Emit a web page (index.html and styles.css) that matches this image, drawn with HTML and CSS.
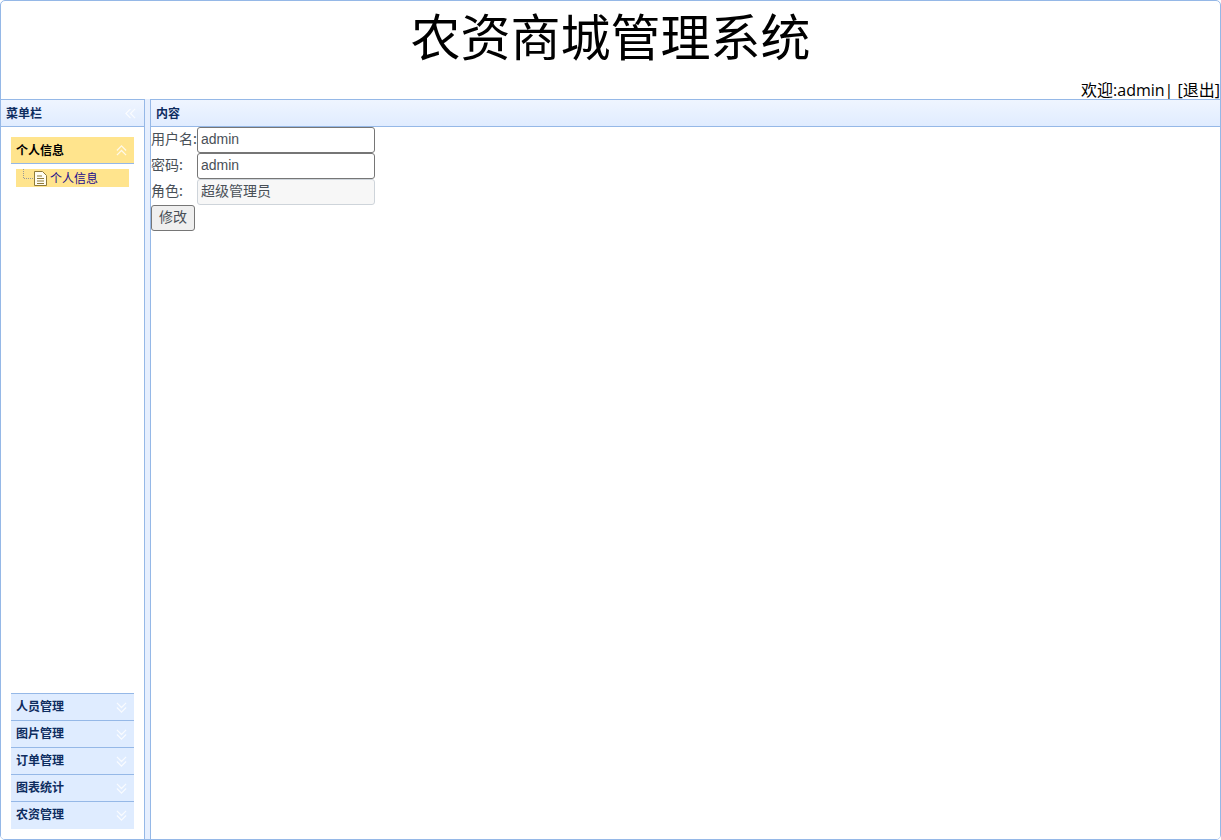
FILE: index.html
```html
<!DOCTYPE html>
<html lang="zh">
<head>
<meta charset="utf-8">
<title>农资商城管理系统</title>
<link rel="stylesheet" href="styles.css">
</head>
<body>
<div class="app">
  <header class="top">
    <h1 class="title">农资商城管理系统</h1>
    <div class="welcome">欢迎:admin| [退出]</div>
  </header>
  <div class="main">
    <aside class="side">
      <div class="panel-head side-head">
        <span>菜单栏</span>
        <svg class="ico" viewBox="0 0 12 12"><path d="M6 1L1 6l5 5M11 1L6 6l5 5"/></svg>
      </div>
      <div class="side-body">
        <div class="acc">
          <div class="acc-head active">
            <span>个人信息</span>
            <svg class="ico" viewBox="0 0 12 12"><path d="M1 6l5-5 5 5M1 11l5-5 5 5"/></svg>
          </div>
          <div class="acc-open">
            <div class="tree-item">
              <svg class="tree-line" width="11" height="12" viewBox="0 0 11 12"><path d="M1.5 0v9.5H11"/></svg>
              <svg class="file" width="13" height="15" viewBox="0 0 13 15"><path class="file-body" d="M.5.5h8l4 4v10H.5z"/><path class="file-lines" d="M3 5h5M3 7.5h7M3 10h7M3 12.5h7"/></svg>
              <span>个人信息</span>
            </div>
          </div>
          <div class="acc-head"><span>人员管理</span><svg class="ico" viewBox="0 0 12 12"><path d="M1 1l5 5 5-5M1 6l5 5 5-5"/></svg></div>
          <div class="acc-head"><span>图片管理</span><svg class="ico" viewBox="0 0 12 12"><path d="M1 1l5 5 5-5M1 6l5 5 5-5"/></svg></div>
          <div class="acc-head"><span>订单管理</span><svg class="ico" viewBox="0 0 12 12"><path d="M1 1l5 5 5-5M1 6l5 5 5-5"/></svg></div>
          <div class="acc-head"><span>图表统计</span><svg class="ico" viewBox="0 0 12 12"><path d="M1 1l5 5 5-5M1 6l5 5 5-5"/></svg></div>
          <div class="acc-head"><span>农资管理</span><svg class="ico" viewBox="0 0 12 12"><path d="M1 1l5 5 5-5M1 6l5 5 5-5"/></svg></div>
        </div>
      </div>
    </aside>
    <section class="content">
      <div class="panel-head content-head"><span>内容</span></div>
      <form class="form">
        <div class="row"><label class="lbl">用户名:</label><input class="field" type="text" value="admin"></div>
        <div class="row"><label class="lbl">密码:</label><input class="field" type="text" value="admin"></div>
        <div class="row"><label class="lbl">角色:</label><div class="field readonly">超级管理员</div></div>
        <button class="btn" type="button">修改</button>
      </form>
    </section>
  </div>
</div>
</body>
</html>
```
FILE: styles.css
```css
* { box-sizing: border-box; }
html, body { margin: 0; height: 100%; }
body {
  height: 840px;
  overflow: hidden;
  background: #fff;
  font-family: "Liberation Sans", "Noto Sans CJK SC", sans-serif;
  font-size: 14px;
  color: #000;
}
.app {
  height: 840px;
  display: flex;
  flex-direction: column;
  border: 1px solid #95b8e7;
  border-radius: 5px;
  overflow: hidden;
}
.top {
  height: 98px;
  flex: none;
  display: flex;
  flex-direction: column;
}
.title {
  margin: 0;
  height: 80px;
  text-align: center;
  font-size: 50px;
  line-height: 77px;
  font-weight: 400;
  font-family: "Liberation Sans", "Noto Sans CJK SC", sans-serif;
}
.welcome {
  height: 18px;
  text-align: right;
  font-size: 16px;
  line-height: 18px;
  font-family: "Open Sans", "Noto Sans CJK SC", sans-serif;
}
.main { flex: 1; display: flex; min-height: 0; background: #e6effe; }
.panel-head {
  height: 28px;
  flex: none;
  display: flex;
  align-items: center;
  justify-content: space-between;
  border-top: 1px solid #95b8e7;
  border-bottom: 1px solid #95b8e7;
  background: linear-gradient(to bottom, #eff5ff, #e0ecff);
  color: #0e2d5f;
  font-size: 12px;
  font-weight: 700;
  font-family: "Noto Sans CJK SC", sans-serif;
}
.panel-head span { padding-bottom: 2px; }
.side {
  width: 144px;
  flex: none;
  display: flex;
  flex-direction: column;
  border-right: 1px solid #95b8e7;
}
.side-head { padding: 0 8px 0 5px; }
.side-body { flex: 1; background: #fff; padding: 10px; display: flex; min-height: 0; }
.acc { flex: 1; display: flex; flex-direction: column; background: #fff; }
.ico { width: 11px; height: 11px; flex: none; fill: none; stroke: #fff; stroke-width: 1.4; opacity: .8; }
.acc-head {
  height: 27px;
  flex: none;
  display: flex;
  align-items: center;
  justify-content: space-between;
  padding: 0 7px 0 5px;
  background: #dfecff;
  border-top: 1px solid #95b8e7;
  color: #0e2d5f;
  font-size: 12px;
  font-weight: 700;
  font-family: "Noto Sans CJK SC", sans-serif;
}
.acc-head span { padding-bottom: 4px; }
.acc-head:last-child { height: 28px; }
.acc-head.active {
  border-top: 0;
  border-bottom: 1px solid #95b8e7;
  background: #ffe48d;
  color: #000;
}
.acc-head.active span { padding-bottom: 2px; }
.acc-open { flex: 1; padding: 5px 5px 0; }
.tree-item {
  height: 18px;
  display: flex;
  align-items: center;
  background: #ffe48d;
  color: #1a0a8c;
  font-size: 12px;
  font-family: "Noto Sans CJK SC", sans-serif;
}
.tree-item span { padding-bottom: 2px; }
.tree-line { margin-left: 6px; margin-bottom: 6px; fill: none; stroke: #999; stroke-dasharray: 1 1; }
.file { margin: 0 3px 0 1px; }
.file-body { fill: #fffdf2; stroke: #8f7a3a; }
.file-lines { fill: none; stroke: #8f7a3a; }
.content {
  flex: 1;
  min-width: 0;
  margin-left: 5px;
  display: flex;
  flex-direction: column;
  background: #fff;
  border-left: 1px solid #95b8e7;
}
.content-head { padding: 0 5px; justify-content: flex-start; }
.form { display: flex; flex-direction: column; align-items: flex-start; color: #495057; }
.row { display: flex; align-items: center; height: 26px; }
.lbl { width: 46px; padding-bottom: 4px; font-size: 14px; font-family: "Noto Sans CJK SC", sans-serif; color: #495057; }
.field {
  width: 178px;
  height: 26px;
  padding: 0 3px 2px;
  border: 1px solid #767676;
  border-radius: 3px;
  background: #fff;
  color: #495057;
  font-family: "Liberation Sans", "Noto Sans CJK SC", sans-serif;
  font-size: 14px;
  outline: 0;
}
.readonly {
  display: flex;
  align-items: center;
  padding-bottom: 4px;
  background: #f7f7f7;
  border-color: #ced4da;
  font-family: "Noto Sans CJK SC", sans-serif;
}
.btn {
  width: 44px;
  height: 26px;
  padding: 0 0 4px;
  border: 1px solid #767676;
  border-radius: 3px;
  background: #efefef;
  color: #495057;
  font-size: 14px;
  font-family: "Noto Sans CJK SC", sans-serif;
}
```
